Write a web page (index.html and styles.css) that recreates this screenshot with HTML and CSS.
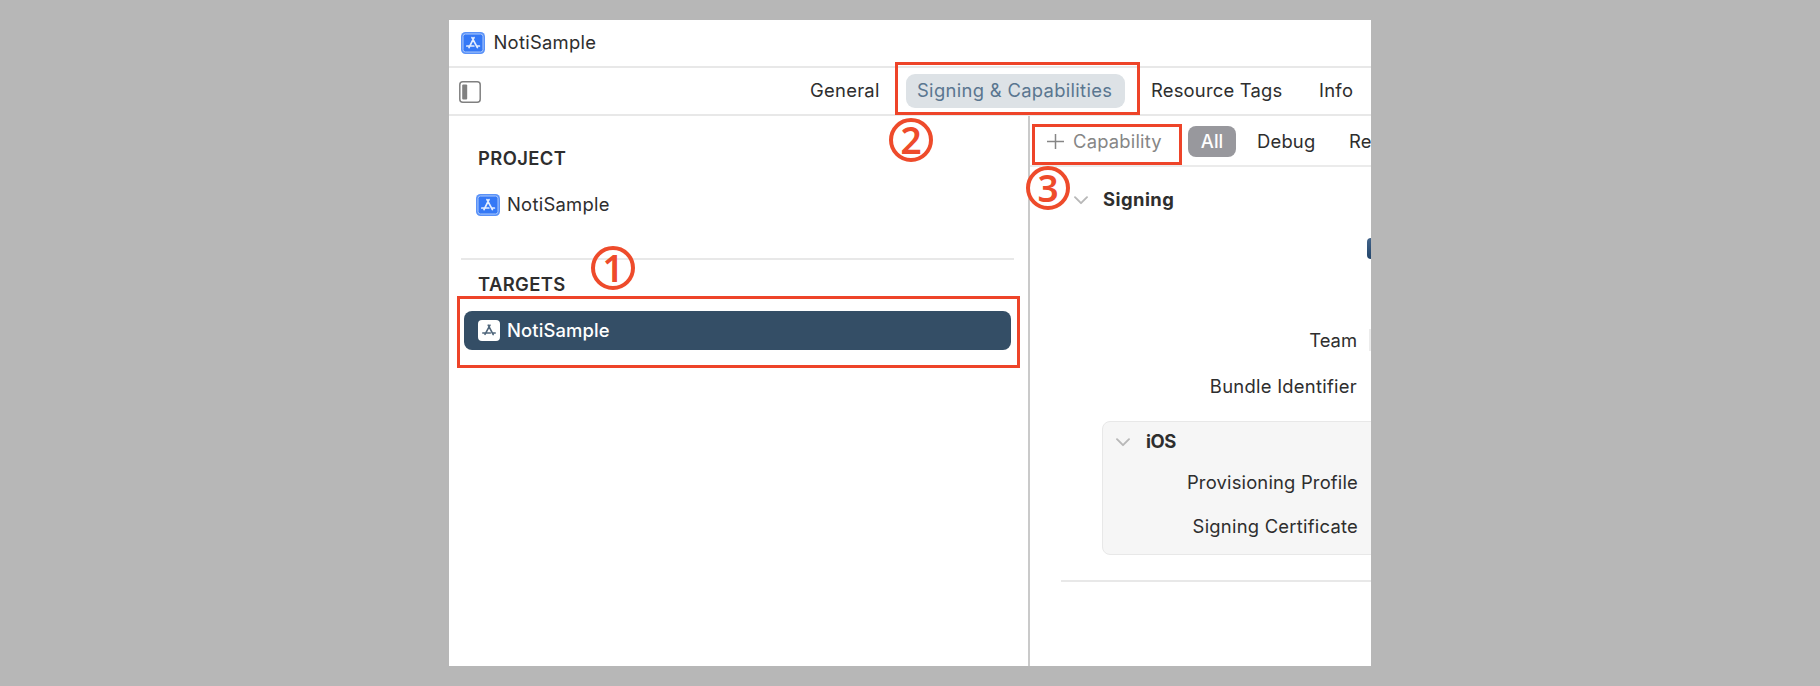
FILE: index.html
```html
<!DOCTYPE html>
<html lang="en">
<head>
<meta charset="utf-8">
<title>NotiSample</title>
<link rel="stylesheet" href="styles.css">
</head>
<body>
<svg class="defs" aria-hidden="true">
  <symbol id="app-blue" viewBox="0 0 24 22">
    <rect x="0" y="0" width="24" height="22" rx="4.5" fill="#5a92f8"/>
    <rect x="2" y="2" width="20" height="18" rx="2.5" fill="#3478f6" stroke="#a9c7fb" stroke-width="1"/>
    <path d="M11 5.6l5.4 10M13 5.6L8 15.6M5.8 14h7M15.6 14h2.8" fill="none" stroke="#e4edfe" stroke-width="1.7" stroke-linecap="round"/>
  </symbol>
  <symbol id="app-white" viewBox="0 0 22 21">
    <rect width="22" height="21" rx="4" fill="#fff"/>
    <path d="M10.2 5.2l5 9.4M12 5.2L7 14.4M4.8 13h7.6M14.4 13h2.8" fill="none" stroke="#4f667b" stroke-width="1.6" stroke-linecap="round"/>
  </symbol>
  <symbol id="chevron" viewBox="0 0 14 9">
    <path d="M1 1.2l6 6 6-6" fill="none" stroke="#b8b8b8" stroke-width="1.9" stroke-linecap="round" stroke-linejoin="round"/>
  </symbol>
</svg>
<main class="window">
  <header class="titlebar">
    <svg class="app-icon"><use href="#app-blue"/></svg>
    <span class="name">NotiSample</span>
  </header>
  <nav class="tabbar">
    <svg class="sidebar-icon" viewBox="0 0 22 22"><rect x=".8" y=".8" width="20.4" height="20.4" rx="3" fill="none" stroke="#808080" stroke-width="1.5"/><rect x="3.2" y="3.6" width="5" height="15" rx="1" fill="#808080"/></svg>
    <span class="tab general">General</span>
    <span class="tab selected">Signing &amp; Capabilities</span>
    <span class="tab tags">Resource Tags</span>
    <span class="tab info">Info</span>
  </nav>
  <div class="body">
    <aside class="sidebar">
      <h2 class="heading project">PROJECT</h2>
      <div class="item">
        <svg class="app-icon"><use href="#app-blue"/></svg>
        <span class="name">NotiSample</span>
      </div>
      <hr class="rule">
      <h2 class="heading targets">TARGETS</h2>
      <div class="item active">
        <svg class="target-icon"><use href="#app-white"/></svg>
        <span class="name">NotiSample</span>
      </div>
    </aside>
    <section class="editor">
      <div class="filters">
        <svg class="plus" viewBox="0 0 17 17"><path d="M8.5 1v15M0 8.5h17" stroke="#868686" stroke-width="1.5"/></svg>
        <span class="capability">Capability</span>
        <span class="all">All</span>
        <span class="debug">Debug</span>
        <span class="release">Re</span>
      </div>
      <div class="section-title">
        <svg class="chevron"><use href="#chevron"/></svg>
        <h3 class="signing">Signing</h3>
      </div>
      <div class="check-row"><span class="checkbox"></span></div>
      <div class="field team-row"><span class="team">Team</span><span class="popup"></span></div>
      <div class="field"><span class="bundle">Bundle Identifier</span></div>
      <div class="platform">
        <div class="platform-title">
          <svg class="chevron"><use href="#chevron"/></svg>
          <h3 class="ios">iOS</h3>
        </div>
        <div class="pfield"><span class="prov">Provisioning Profile</span></div>
        <div class="pfield cert-row"><span class="cert">Signing Certificate</span></div>
      </div>
      <hr class="end-rule">
    </section>
  </div>
</main>
<div class="mark mark-target"></div>
<div class="mark mark-tab"></div>
<div class="mark mark-capability"></div>
<div class="step step-1">1</div>
<div class="step step-2">2</div>
<div class="step step-3">3</div>
</body>
</html>
```
FILE: styles.css
```css
* { box-sizing: border-box; }
body {
  margin: 0;
  height: 686px;
  padding: 20px 449px;
  overflow: hidden;
  position: relative;
  background: #b7b7b7;
  color: #2e2e2e;
  font: 400 18.4px/24px Inter, "Liberation Sans", sans-serif;
  letter-spacing: 0.2px;
  white-space: nowrap;
}
h2, h3, hr { margin: 0; border: 0; font-size: inherit; }
svg { display: block; flex: none; }
.defs { position: absolute; width: 0; height: 0; }
.window {
  width: 922px;
  height: 646px;
  overflow: hidden;
  background: #fff;
  display: flex;
  flex-direction: column;
}
.titlebar {
  height: 48px;
  flex: none;
  padding: 0 0 1px 12px;
  display: flex;
  align-items: center;
  gap: 8.5px;
  border-bottom: 2px solid #e8e8e8;
}
.app-icon { width: 24px; height: 22px; }
.name { letter-spacing: 0.26px; margin-top: -2px; }
.tabbar {
  height: 48px;
  flex: none;
  display: flex;
  align-items: center;
  padding: 0 0 1px 10px;
  border-bottom: 2px solid #e8e8e8;
}
.sidebar-icon { width: 22px; height: 22px; margin-top: 2px; }
.tab { letter-spacing: 0.28px; flex: none; margin-top: -2px; }
.general { margin-left: 329px; width: 96px; }
.selected {
  width: 219px;
  height: 34px;
  margin-top: 0;
  padding: 4px 0 0 11px;
  border-radius: 9px;
  background: #dde2e6;
  color: #5a7690;
  letter-spacing: 0.32px;
}
.tags { margin-left: 26px; width: 168px; letter-spacing: 0.2px; }
.body { flex: 1; display: flex; min-height: 0; }
.sidebar {
  width: 581px;
  flex: none;
  border-right: 2px solid #cacaca;
}
.heading {
  font-weight: 600;
  padding: 30px 0 0 29px;
  height: 54px;
  letter-spacing: 0.4px;
}
.item {
  display: flex;
  align-items: center;
  gap: 7px;
  padding-left: 27px;
  height: 24px;
  margin-top: 23px;
}
.rule { height: 2px; margin: 41px 14px 0 12px; background: #e8e8e8; }
.targets { padding-top: 12px; height: 37px; }
.active {
  height: 39px;
  width: 547px;
  margin: 14px 0 0 15px;
  padding-left: 14px;
  border-radius: 8px;
  background: #344e66;
  color: #fff;
}
.active .name { font-weight: 500; letter-spacing: 0.13px; }
.target-icon { width: 22px; height: 21px; }
.editor { flex: 1; min-width: 0; overflow: hidden; }
.filters {
  display: flex;
  align-items: center;
  height: 51px;
  padding: 1px 0 0 17px;
  border-bottom: 2px solid #ebebeb;
}
.plus { width: 17px; height: 17px; }
.capability { color: #868686; margin-left: 9px; width: 115px; flex: none; }
.all {
  width: 48px;
  height: 31px;
  line-height: 31px;
  border-radius: 8px;
  background: #98989d;
  color: #fff;
  text-align: center;
  flex: none;
  font-weight: 500;
  letter-spacing: 0;
}
.debug { margin-left: 21px; width: 92px; flex: none; }
.section-title {
  display: flex;
  align-items: center;
  height: 45px;
  padding: 21px 0 0 44px;
  gap: 15px;
}
.chevron { width: 14px; height: 9px; }
h3 { font-weight: 700; margin-top: -2px; }
.signing { letter-spacing: 0.45px; }
.ios { letter-spacing: -0.5px; }
.check-row { padding: 26px 0 0 337px; height: 116px; }
.checkbox {
  display: block;
  width: 22px;
  height: 21px;
  border-radius: 4px;
  background: linear-gradient(#43648a, #23456b);
}
.field {
  height: 46px;
  display: flex;
  justify-content: flex-end;
  padding-right: 14px;
}
.team-row { padding-right: 0; gap: 12px; }
.team { letter-spacing: 0; }
.bundle { letter-spacing: 0.27px; }
.popup { width: 2px; height: 22px; margin-top: 1px; background: #ececec; }
.platform {
  margin: 1px -10px 0 72px;
  height: 134px;
  border: 1px solid #e8e8e8;
  border-radius: 8px;
  background: #f6f6f6;
}
.platform-title {
  display: flex;
  align-items: center;
  gap: 16px;
  height: 32px;
  padding: 8px 0 0 13px;
}
.pfield { display: flex; justify-content: flex-end; padding: 16px 22px 0 0; }
.prov { letter-spacing: 0.18px; }
.cert { letter-spacing: 0.24px; }
.cert-row { padding-top: 20px; }
.end-rule { height: 2px; background: #e8e8e8; margin: 25px 0 0 31px; }
.mark { position: absolute; border: 3px solid #ee4429; }
.mark-target { left: 457px; top: 296px; width: 563px; height: 72px; }
.mark-tab { left: 895px; top: 62px; width: 245px; height: 53px; }
.mark-capability { left: 1032px; top: 124px; width: 150px; height: 41px; }
.step {
  position: absolute;
  width: 44px;
  height: 44px;
  border: 4px solid #ee4b2b;
  border-radius: 50%;
  color: #ee4b2b;
  font: 600 37px/36px "Noto Sans", "Open Sans", sans-serif;
  letter-spacing: 0;
  text-align: center;
}
.step-1 { left: 591px; top: 246px; }
.step-2 { left: 889px; top: 118px; }
.step-3 { left: 1026px; top: 166px; }
```
